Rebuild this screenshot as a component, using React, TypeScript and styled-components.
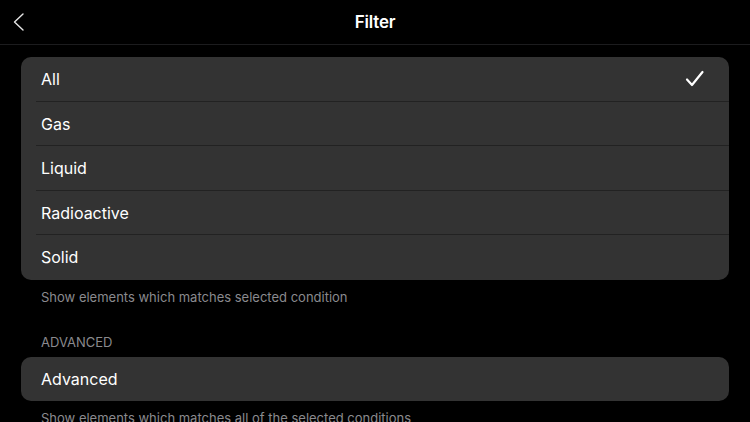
import React, {useState} from "react";
import styled, {createGlobalStyle} from "styled-components";

const Global = createGlobalStyle`
  html, body {
    margin: 0;
    padding: 0;
    background: #000;
    font-family: "Inter", "Liberation Sans", "Noto Sans", sans-serif;
    -webkit-font-smoothing: antialiased;
  }
`;

const Page = styled.div`
  width: 750px;
  height: 422px;
  overflow: hidden;
  background: #000;
  color: #fff;
`;

const NavBar = styled.div`
  height: 44px;
  border-bottom: 1px solid #1c1c1e;
  display: grid;
  grid-template-columns: 60px 1fr 60px;
  align-items: center;
`;

const BackButton = styled.button`
  background: none;
  border: none;
  padding: 0 0 0 12px;
  height: 44px;
  display: flex;
  align-items: center;
  cursor: pointer;
`;

const Title = styled.h1`
  margin: 0;
  text-align: center;
  font-size: 17px;
  font-weight: 600;
  letter-spacing: -0.2px;
`;

const Content = styled.div`
  padding: 12px 21px 0;
`;

const Card = styled.div`
  background: #333333;
  border-radius: 10px;
  overflow: hidden;
`;

const Row = styled.div<{ $last?: boolean }>`
  height: 44.5px;
  display: flex;
  align-items: center;
  padding: 0 24px 0 20px;
  position: relative;
  font-size: 16px;
  cursor: pointer;
  &::after {
    content: "";
    display: ${p => (p.$last ? "none" : "block")};
    position: absolute;
    left: 15px;
    right: 0;
    bottom: 0;
    height: 1px;
    background: #222222;
  }
  > .label {
    flex: 1;
  }
`;

const Footer = styled.div`
  font-size: 13px;
  color: #8a8a8e;
  padding: 9px 20px 0;
  height: 28px;
`;

const SectionHeader = styled.div`
  font-size: 13px;
  color: #8a8a8e;
  padding: 17px 20px 7px;
  text-transform: uppercase;
`;

const Check = () => (
  <svg width="20" height="18" viewBox="0 0 20 18">
    <path d="M2 9.5 L7 15 L17.5 2" fill="none" stroke="#fff" strokeWidth="2.2" strokeLinecap="round" strokeLinejoin="round"/>
  </svg>
);

const Chevron = () => (
  <svg width="14" height="20" viewBox="0 0 14 20">
    <path d="M11 2 L2.5 10 L11 18" fill="none" stroke="#e5e5e5" strokeWidth="1.4" strokeLinecap="round" strokeLinejoin="round"/>
  </svg>
);

const options = ["All", "Gas", "Liquid", "Radioactive", "Solid"];

export default function App() {
  const [selected, setSelected] = useState("All");
  return (
    <Page>
      <Global/>
      <NavBar>
        <BackButton><Chevron/></BackButton>
        <Title>Filter</Title>
        <div/>
      </NavBar>
      <Content>
        <Card>
          {options.map((o, i) =>
            <Row key={o} $last={i === options.length - 1} onClick={() => setSelected(o)}>
              <span className="label">{o}</span>
              {selected === o && <Check/>}
            </Row>
          )}
        </Card>
        <Footer>Show elements which matches selected condition</Footer>
        <SectionHeader>Advanced</SectionHeader>
        <Card>
          <Row $last>
            <span className="label">Advanced</span>
          </Row>
        </Card>
        <Footer>Show elements which matches all of the selected conditions</Footer>
      </Content>
    </Page>
  );
}
